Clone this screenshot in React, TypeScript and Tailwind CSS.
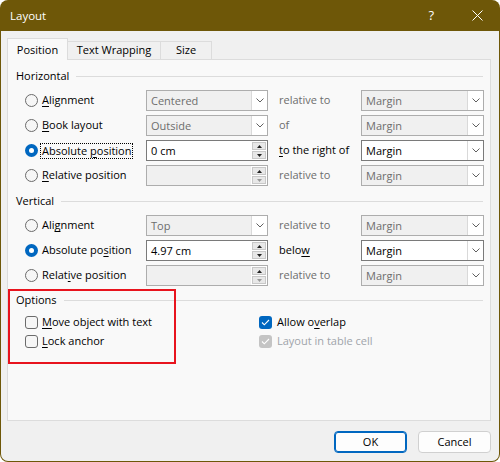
import React from 'react';

const Chevron = () => (
  <svg width="8" height="5" viewBox="0 0 8 5">
    <polyline points="0.5,0.5 4,4 7.5,0.5" fill="none" stroke="#606060" strokeWidth="1" />
  </svg>
);

const Radio: React.FC<{ checked?: boolean }> = ({ checked }) =>
  checked ? (
    <span className="w-[13px] h-[13px] rounded-full bg-[#0067C0] flex items-center justify-center shrink-0">
      <span className="w-[5px] h-[5px] rounded-full bg-white" />
    </span>
  ) : (
    <span className="w-[13px] h-[13px] rounded-full border border-[#6B6B6B] bg-[#F6F6F6] shrink-0" />
  );

const Check: React.FC<{ checked?: boolean; disabled?: boolean }> = ({ checked, disabled }) => {
  if (!checked) {
    return <span className="w-[13px] h-[13px] rounded-[3px] border border-[#6B6B6B] bg-[#F6F6F6] shrink-0" />;
  }
  return (
    <span
      className={
        'w-[13px] h-[13px] rounded-[3px] flex items-center justify-center shrink-0 ' +
        (disabled ? 'bg-[#C4C4C4]' : 'bg-[#0067C0]')
      }
    >
      <svg width="9" height="7" viewBox="0 0 9 7">
        <polyline points="1,3.5 3.3,5.8 8,1" fill="none" stroke="white" strokeWidth="1.1" />
      </svg>
    </span>
  );
};

const Combo: React.FC<{ value: string; enabled?: boolean; wide?: boolean }> = ({ value, enabled, wide }) => (
  <div
    className={
      'h-[21px] flex border shrink-0 ' +
      (wide ? 'w-[123px] ' : 'w-[122px] ') +
      (enabled ? 'bg-white border-[#7A7A7A] text-black' : 'bg-[#F0F0F0] border-[#ADADAD] text-[#6D6D6D]')
    }
  >
    <span className="flex-1 pl-[4px] leading-[19px]">{value}</span>
    <span className="w-[16px] h-full bg-white border-l border-[#D9D9D9] flex items-center justify-center">
      <Chevron />
    </span>
  </div>
);

const Spin: React.FC<{ value?: string; enabled?: boolean }> = ({ value, enabled }) => (
  <div
    className={
      'w-[122px] h-[21px] flex border shrink-0 ' +
      (enabled ? 'bg-white border-[#7A7A7A] text-black' : 'bg-[#F0F0F0] border-[#ADADAD]')
    }
  >
    <span className="flex-1 pl-[4px] leading-[19px]">{value}</span>
    <span className="w-[16px] h-full flex flex-col bg-white">
      <span className="flex-1 m-[1px] mb-0 bg-[#E8E8E8] border border-[#C8C8C8] flex items-center justify-center">
        <svg width="5" height="3" viewBox="0 0 5 3">
          <polygon points="0,3 2.5,0 5,3" fill="#222" />
        </svg>
      </span>
      <span className="flex-1 m-[1px] bg-[#E8E8E8] border border-[#C8C8C8] flex items-center justify-center">
        <svg width="5" height="3" viewBox="0 0 5 3">
          <polygon points="0,0 2.5,3 5,0" fill={enabled ? '#222' : '#9A9A9A'} />
        </svg>
      </span>
    </span>
  </div>
);

const U: React.FC<{ children: React.ReactNode }> = ({ children }) => (
  <span className="underline underline-offset-[2px] decoration-[1px]">{children}</span>
);

interface RowProps {
  checked?: boolean;
  focused?: boolean;
  label: React.ReactNode;
  field: React.ReactNode;
  label2: React.ReactNode;
  label2Enabled?: boolean;
  combo2: React.ReactNode;
}

const Row: React.FC<RowProps> = ({ checked, focused, label, field, label2, label2Enabled, combo2 }) => (
  <div className="h-[25px] flex items-center">
    <div className="w-[130px] pl-[9px] flex items-center shrink-0">
      <Radio checked={checked} />
      {focused ? (
        <span className="ml-[2px] px-[1px] h-[16px] leading-[14px] border border-dotted border-black">{label}</span>
      ) : (
        <span className="ml-[4px]">{label}</span>
      )}
    </div>
    {field}
    <span className={'ml-[11px] w-[82px] shrink-0 ' + (label2Enabled ? 'text-black' : 'text-[#6D6D6D]')}>
      {label2}
    </span>
    {combo2}
  </div>
);

const GroupHeader: React.FC<{ title: string; className?: string }> = ({ title, className }) => (
  <div className={'h-[14px] flex items-center ' + (className || '')}>
    <span>{title}</span>
    <span className="flex-1 h-px bg-[#DCDCDC] ml-[7px]" />
  </div>
);

export default function App() {
  return (
    <div className="relative w-[500px] h-[462px] bg-[#6E5708] rounded-[8px] px-px pb-px flex flex-col font-['Open_Sans',sans-serif] text-[11px] text-black">
      {/* title bar */}
      <div className="h-[31px] flex items-center text-white shrink-0">
        <span className="ml-[9px] text-[11.5px]">Layout</span>
        <span className="ml-auto text-[13px] mr-[38px]">?</span>
        <svg width="11" height="11" viewBox="0 0 11 11" className="mr-[16px]">
          <path d="M0.5 0.5 L10.5 10.5 M10.5 0.5 L0.5 10.5" stroke="white" strokeWidth="1" />
        </svg>
      </div>

      {/* body */}
      <div className="flex-1 bg-[#F0F0F0] rounded-b-[7px] pl-[6px] pt-[7px] flex flex-col">
        {/* tabs */}
        <div className="flex items-end h-[21px]">
          <div className="relative z-10 w-[61px] h-[22px] -mb-px bg-[#F9F9F9] border border-b-0 border-[#DCDCDC] flex items-center justify-center pt-[1px]">
            Position
          </div>
          <div className="w-[93px] h-[18px] border border-l-0 border-b-0 border-[#DCDCDC] bg-[#F0F0F0] flex items-center justify-center">
            Text Wrapping
          </div>
          <div className="w-[51px] h-[18px] border border-l-0 border-b-0 border-[#DCDCDC] bg-[#F0F0F0] flex items-center justify-center">
            Size
          </div>
        </div>

        {/* panel */}
        <div className="w-[484px] h-[362px] border border-[#DCDCDC] bg-[#F9F9F9] pt-[9px] pl-[8px] pr-[7px] flex flex-col">
          <GroupHeader title="Horizontal" className="mb-[5px]" />
          <Row
            label={<><U>A</U>lignment</>}
            field={<Combo value="Centered" />}
            label2="relative to"
            combo2={<Combo value="Margin" wide />}
          />
          <Row
            label={<><U>B</U>ook layout</>}
            field={<Combo value="Outside" />}
            label2="of"
            combo2={<Combo value="Margin" wide />}
          />
          <Row
            checked
            focused
            label={<>Absolute <U>p</U>osition</>}
            field={<Spin value="0 cm" enabled />}
            label2={<><U>t</U>o the right of</>}
            label2Enabled
            combo2={<Combo value="Margin" wide enabled />}
          />
          <Row
            label={<><U>R</U>elative position</>}
            field={<Spin />}
            label2="relative to"
            combo2={<Combo value="Margin" wide />}
          />

          <GroupHeader title="Vertical" className="mt-[6px] mb-[5px]" />
          <Row
            label={<>Ali<U>g</U>nment</>}
            field={<Combo value="Top" />}
            label2="relative to"
            combo2={<Combo value="Margin" wide />}
          />
          <Row
            checked
            label={<>Absolute po<U>s</U>ition</>}
            field={<Spin value="4.97 cm" enabled />}
            label2={<>belo<U>w</U></>}
            label2Enabled
            combo2={<Combo value="Margin" wide enabled />}
          />
          <Row
            label={<>Relat<U>i</U>ve position</>}
            field={<Spin />}
            label2="relative to"
            combo2={<Combo value="Margin" wide />}
          />

          <GroupHeader title="Options" className="mt-[5px] mb-[6px]" />
          <div className="flex pl-[9px]">
            <div className="w-[234px] flex flex-col">
              <div className="h-[19px] flex items-center">
                <Check />
                <span className="ml-[4px]"><U>M</U>ove object with text</span>
              </div>
              <div className="h-[19px] flex items-center">
                <Check />
                <span className="ml-[4px]"><U>L</U>ock anchor</span>
              </div>
            </div>
            <div className="flex flex-col">
              <div className="h-[19px] flex items-center">
                <Check checked />
                <span className="ml-[5px]">Allow o<U>v</U>erlap</span>
              </div>
              <div className="h-[19px] flex items-center">
                <Check checked disabled />
                <span className="ml-[5px] text-[#A0A4AA]">Layout in table cell</span>
              </div>
            </div>
          </div>
        </div>

        {/* buttons */}
        <div className="flex justify-end gap-[11px] mt-[10px] w-[484px]">
          <button className="w-[73px] h-[22px] rounded-[4px] border border-[#0067C0] bg-[#FDFDFD] shadow-[inset_0_0_0_1px_#0067C0]">
            OK
          </button>
          <button className="w-[73px] h-[22px] rounded-[4px] border border-[#D0D0D0] bg-[#FDFDFD]">
            Cancel
          </button>
        </div>
      </div>

      {/* annotation */}
      <div className="absolute left-[8px] top-[289px] w-[168px] h-[75px] border-2 border-[#E8141E] pointer-events-none" />
    </div>
  );
}
